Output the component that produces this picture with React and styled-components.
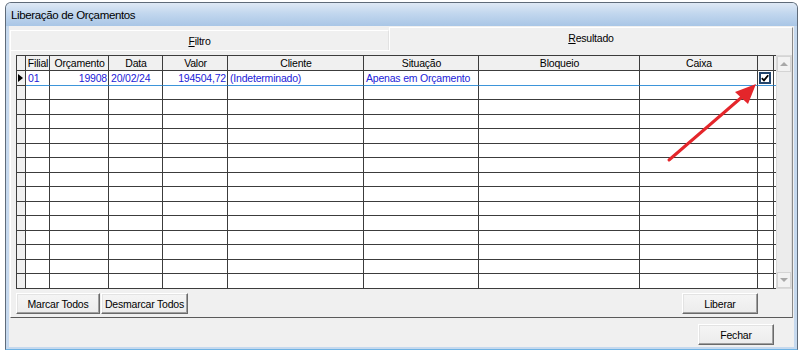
import React from "react";
import styled, { createGlobalStyle } from "styled-components";

const GlobalStyle = createGlobalStyle`
  html, body {
    margin: 0;
    padding: 0;
    background: #ffffff;
  }
  body {
    font-family: "Liberation Sans", Arial, sans-serif;
    font-size: 10.5px;
    letter-spacing: -0.2px;
    color: #000;
  }
  * {
    box-sizing: border-box;
  }
`;

const COLS = "9px 24px 59px 54px 65px 136px 115px 161px 118px 16px 1fr";

const Page = styled.div`
  position: relative;
  width: 800px;
  height: 351px;
  padding: 2px 2px 1px 5px;
`;

const Window = styled.div`
  height: 348px;
  display: flex;
  flex-direction: column;
  border: 1px solid #5f6b79;
  border-bottom-color: #6fb3e4;
  border-radius: 6px 6px 0 0;
  background: #c6d9ee;
  overflow: hidden;
`;

const TitleBar = styled.div`
  height: 23px;
  flex: none;
  padding-left: 5px;
  line-height: 24px;
  font-size: 11.5px;
  letter-spacing: -0.35px;
  background: linear-gradient(#dfe9f5, #c2d7ee 45%, #a9c6e6);
`;

const Client = styled.div`
  flex: 1;
  margin: 0 3px 2px 3px;
  padding: 1px 1px 0 1px;
  background: #f0f0f0;
  display: flex;
  flex-direction: column;
`;

const TabStrip = styled.div`
  height: 23px;
  display: flex;
  align-items: flex-end;
`;

const Tab = styled.div`
  position: relative;
  height: ${(p) => (p.selected ? "24px" : "20px")};
  width: ${(p) => (p.selected ? "auto" : "379px")};
  flex: ${(p) => (p.selected ? "1" : "none")};
  margin-bottom: ${(p) => (p.selected ? "-1px" : "0")};
  z-index: ${(p) => (p.selected ? 1 : 0)};
  background: #f0f0f0;
  border-top: 1px solid #ffffff;
  border-left: 1px solid #ffffff;
  border-right: 1px solid ${(p) => (p.selected ? "#8a8a8a" : "#e2e2e2")};
  display: flex;
  align-items: center;
  justify-content: center;
  padding-bottom: ${(p) => (p.selected ? "4px" : "0")};
`;

const Panel = styled.div`
  height: 268px;
  flex: none;
  border-top: 1px solid #ffffff;
  border-left: 1px solid #ffffff;
  border-right: 1px solid #8a8a8a;
  border-bottom: 1px solid #5a5a5a;
  padding: 4px 0 0 5px;
  display: flex;
  flex-direction: column;
`;

const GridWrap = styled.div`
  display: flex;
  height: 234px;
`;

const Table = styled.div`
  width: 760px;
  border-top: 1px solid #3c3c3c;
  border-left: 1px solid #3c3c3c;
  border-bottom: 1px solid #3c3c3c;
  background: #ffffff;
  display: flex;
  flex-direction: column;
`;

const Row = styled.div`
  display: grid;
  grid-template-columns: ${COLS};
  height: ${(p) => (p.header ? "15px" : "14.5px")};
  flex: none;
  background: ${(p) => (p.header ? "#f0f0f0" : "#ffffff")};
`;

const Cell = styled.div`
  border-right: ${(p) => (p.filler ? "none" : "1px solid #3c3c3c")};
  border-bottom: 1px solid ${(p) => (p.selected ? "#3d95da" : "#3c3c3c")};
  background: ${(p) => (p.gray ? "#f0f0f0" : "transparent")};
  color: ${(p) => (p.data ? "#2222d8" : "#000")};
  text-align: ${(p) => p.align || "left"};
  padding: 0 1px 0 2px;
  line-height: 14px;
  white-space: nowrap;
  overflow: hidden;
  display: flex;
  align-items: center;
  justify-content: ${(p) =>
    p.align === "center" ? "center" : p.align === "right" ? "flex-end" : "flex-start"};
`;

const Indicator = styled.span`
  width: 0;
  height: 0;
  margin-left: -1px;
  border-top: 4px solid transparent;
  border-bottom: 4px solid transparent;
  border-left: 5px solid #000;
`;

const CheckBox = styled.div`
  width: 12px;
  height: 12px;
  margin-left: -1px;
  border: 2px solid #23456c;
  background: #ffffff;
  display: flex;
  align-items: center;
  justify-content: center;
`;

const ScrollBar = styled.div`
  width: 17px;
  background: #ececec;
  border: 1px solid #dadada;
  display: flex;
  flex-direction: column;
  justify-content: space-between;
`;

const ScrollButton = styled.div`
  height: 16px;
  background: #f2f2f2;
  border: 1px solid #d4d4d4;
  display: flex;
  align-items: center;
  justify-content: center;
`;

const Arrow = styled.span`
  width: 0;
  height: 0;
  border-left: 4px solid transparent;
  border-right: 4px solid transparent;
  ${(p) =>
    p.down ? "border-top: 4px solid #a8a8a8;" : "border-bottom: 4px solid #a8a8a8;"}
`;

const ButtonRow = styled.div`
  display: flex;
  margin-top: 4px;
`;

const Button = styled.button`
  height: 21px;
  width: ${(p) => p.w}px;
  margin: 0;
  margin-left: ${(p) => (p.push ? "auto" : p.gap ? `${p.gap}px` : "0")};
  margin-right: ${(p) => (p.right ? `${p.right}px` : "0")};
  padding: 0;
  font-family: inherit;
  font-size: 10.5px;
  letter-spacing: -0.2px;
  color: #000;
  background: linear-gradient(#f5f5f5, #ececec);
  border: 1px solid;
  border-color: #ffffff #6a6a6a #6a6a6a #ffffff;
  box-shadow: inset -1px -1px 0 #a0a0a0, inset 1px 1px 0 #e3e3e3;
`;

const Footer = styled.div`
  display: flex;
  justify-content: flex-end;
  margin-top: 6px;
`;

const Overlay = styled.svg`
  position: absolute;
  left: 0;
  top: 0;
  pointer-events: none;
`;

const headers = ["Filial", "Orçamento", "Data", "Valor", "Cliente", "Situação", "Bloqueio", "Caixa"];

const firstRow = [
  { text: "01" },
  { text: "19908", align: "right" },
  { text: "20/02/24" },
  { text: "194504,72", align: "right" },
  { text: "(Indeterminado)" },
  { text: "Apenas em Orçamento" },
  { text: "" },
  { text: "" },
];

const emptyRows = Array.from({ length: 14 });

const App = () => {
  return (
    <Page>
      <GlobalStyle />
      <Window>
        <TitleBar>Liberação de Orçamentos</TitleBar>
        <Client>
          <TabStrip>
            <Tab>
              <span>
                <u>F</u>iltro
              </span>
            </Tab>
            <Tab selected>
              <span>
                <u>R</u>esultado
              </span>
            </Tab>
          </TabStrip>
          <Panel>
            <GridWrap>
              <Table>
                <Row header>
                  <Cell gray />
                  {headers.map((h) => (
                    <Cell key={h} align="center">
                      {h}
                    </Cell>
                  ))}
                  <Cell />
                  <Cell filler />
                </Row>
                <Row>
                  <Cell gray>
                    <Indicator />
                  </Cell>
                  {firstRow.map((c, i) => (
                    <Cell key={i} data selected align={c.align}>
                      {c.text}
                    </Cell>
                  ))}
                  <Cell selected>
                    <CheckBox>
                      <svg width="8" height="8" viewBox="0 0 8 8">
                        <path d="M0.8 4.2 L3 6.4 L7.2 1.2" fill="none" stroke="#000" strokeWidth="1.8" />
                      </svg>
                    </CheckBox>
                  </Cell>
                  <Cell filler selected />
                </Row>
                {emptyRows.map((_, r) => (
                  <Row key={r}>
                    <Cell gray />
                    {headers.map((h) => (
                      <Cell key={h} />
                    ))}
                    <Cell />
                    <Cell filler />
                  </Row>
                ))}
              </Table>
              <ScrollBar>
                <ScrollButton>
                  <Arrow />
                </ScrollButton>
                <ScrollButton>
                  <Arrow down />
                </ScrollButton>
              </ScrollBar>
            </GridWrap>
            <ButtonRow>
              <Button w={84}>Marcar Todos</Button>
              <Button w={87} gap={1}>Desmarcar Todos</Button>
              <Button w={76} push right={34}>Liberar</Button>
            </ButtonRow>
          </Panel>
          <Footer>
            <Button w={76} right={19}>Fechar</Button>
          </Footer>
        </Client>
      </Window>
      <Overlay width="800" height="351" viewBox="0 0 800 351">
        <line x1="669" y1="160" x2="742" y2="97" stroke="#e4262b" strokeWidth="3" strokeLinecap="round" />
        <polygon points="756,84 735,92 748,104" fill="#e4262b" />
      </Overlay>
    </Page>
  );
};

export default App;
